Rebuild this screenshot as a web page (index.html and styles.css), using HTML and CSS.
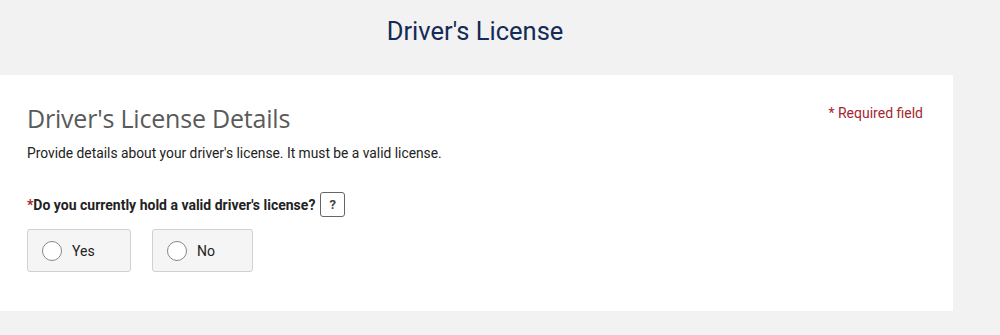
FILE: index.html
```html
<!DOCTYPE html>
<html>
<head>
<meta charset="utf-8">
<link rel="stylesheet" href="styles.css">
</head>
<body>
<header class="page-head">
  <h1 class="page-title">Driver's License</h1>
</header>
<section class="card">
  <div class="card-top">
    <h2 class="card-title">Driver's License Details</h2>
    <span class="req">* Required field</span>
  </div>
  <p class="desc">Provide details about your driver's license. It must be a valid license.</p>
  <div class="question">
    <span class="star">*</span>Do you currently hold a valid driver's license?
    <span class="help">?</span>
  </div>
  <div class="options">
    <label class="opt opt-yes"><span class="radio"></span>Yes</label>
    <label class="opt opt-no"><span class="radio"></span>No</label>
  </div>
</section>
</body>
</html>
```
FILE: styles.css
```css
html, body {
  margin: 0;
  padding: 0;
  background: #f2f2f2;
  font-family: Roboto, "Liberation Sans", Arial, sans-serif;
}
.page-head {
  height: 75px;
  display: flex;
  justify-content: center;
}
.page-title {
  margin: 15px 0 0 -50px;
  font-size: 25.5px;
  font-weight: 400;
  color: #142a57;
  line-height: 32px;
}
.card {
  background: #fff;
  width: 953px;
  height: 236px;
  box-sizing: border-box;
  padding: 26px 30px 0 27px;
}
.card-top {
  display: flex;
  justify-content: space-between;
  align-items: flex-start;
}
.card-title {
  margin: 0;
  font-family: "Open Sans", Lato, sans-serif;
  font-weight: 400;
  font-size: 25px;
  line-height: 34px;
  color: #5a5a5a;
  letter-spacing: -0.2px;
}
.req {
  color: #a3262f;
  font-size: 14px;
  margin-top: 4px;
}
.desc {
  margin: 9px 0 0;
  font-size: 13.8px;
  color: #222;
  line-height: 18px;
}
.question {
  margin-top: 30px;
  display: flex;
  align-items: center;
  font-size: 14px;
  font-weight: 700;
  color: #222;
  height: 25px;
}
.star {
  color: #a3262f;
}
.help {
  margin-left: 5px;
  width: 25px;
  height: 25px;
  box-sizing: border-box;
  border: 1px solid #666;
  border-radius: 3px;
  display: flex;
  align-items: center;
  justify-content: center;
  font-size: 13px;
  color: #444;
}
.options {
  margin-top: 12px;
  display: flex;
  gap: 21px;
}
.opt {
  height: 43px;
  box-sizing: border-box;
  border: 1px solid #d0d0d0;
  border-radius: 3px;
  background: #f5f5f5;
  display: flex;
  align-items: center;
  padding-left: 14px;
  font-size: 14px;
  color: #222;
}
.opt-yes { width: 104px; }
.opt-no { width: 101px; }
.radio {
  width: 20px;
  height: 20px;
  box-sizing: border-box;
  border: 1px solid #888;
  border-radius: 50%;
  background: #fff;
  margin-right: 10px;
}
```
